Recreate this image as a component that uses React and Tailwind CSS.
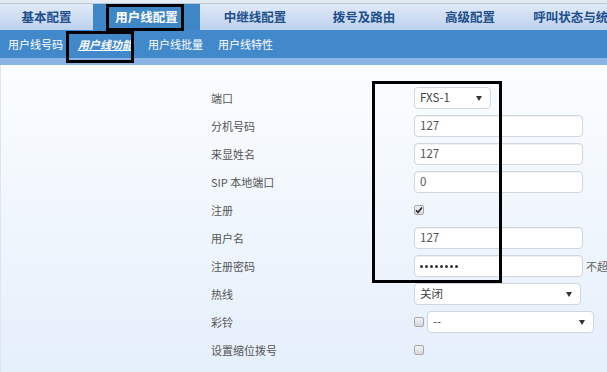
import React from "react";

const font = { fontFamily: '"Noto Sans CJK SC", "Liberation Sans", sans-serif' };

const tabs = [
  { t: "基本配置", w: "w-[93px]" },
  { t: "用户线配置", w: "w-[107px]", active: true },
  { t: "中继线配置", w: "w-[110px]" },
  { t: "拨号及路由", w: "w-[108px]" },
  { t: "高级配置", w: "w-[104px]" },
  { t: "呼叫状态与统计", w: "w-[110px]" },
];

function Caret() {
  return (
    <svg width="6" height="5" viewBox="0 0 6 5">
      <path d="M0 0 H6 L3 5 Z" fill="#333" />
    </svg>
  );
}

function Input({ value, w = "w-[169px]", children }) {
  return (
    <div className={`${w} shrink-0 h-[22px] rounded-[4px] border border-[#cfd6df] bg-white flex items-center px-[5px] text-[11.5px] text-[#555] shadow-[inset_0_1px_1px_rgba(0,0,0,0.06)]`}>
      {children ?? value}
    </div>
  );
}

function Select({ value, w }) {
  return (
    <div className={`${w} shrink-0 h-[22px] rounded-[4px] border border-[#cfd6df] bg-white flex items-center justify-between pl-[5px] pr-[8px] text-[11.5px] text-[#444]`}>
      <span>{value}</span>
      <Caret />
    </div>
  );
}

function Check({ checked }) {
  return (
    <div className="w-[10px] h-[10px] shrink-0 rounded-[2px] border border-[#a8a8a8] bg-gradient-to-b from-[#f2f2f2] to-[#d8d8d8] flex items-center justify-center">
      {checked && (
        <svg width="8" height="8" viewBox="0 0 8 8">
          <path d="M1 4.2 L3 6.2 L7 1.5" stroke="#222" strokeWidth="1.6" fill="none" />
        </svg>
      )}
    </div>
  );
}

function Dots() {
  return (
    <div className="flex gap-[2px]">
      {Array.from({ length: 8 }).map((_, i) => (
        <div key={i} className="w-[3px] h-[3px] rounded-full bg-[#333]" />
      ))}
    </div>
  );
}

const rows = [
  ["端口", <Select value="FXS-1" w="w-[77px]" />],
  ["分机号码", <Input value="127" />],
  ["来显姓名", <Input value="127" />],
  ["SIP 本地端口", <Input value="0" />],
  ["注册", <Check checked />],
  ["用户名", <Input value="127" />],
  [
    "注册密码",
    <div className="flex items-center gap-[3px]">
      <Input>
        <Dots />
      </Input>
      <span className="text-[11px] text-[#666] whitespace-nowrap">不超过</span>
    </div>,
  ],
  ["热线", <Select value="关闭" w="w-[167px]" />],
  [
    "彩铃",
    <div className="flex items-center gap-[3px]">
      <Check />
      <Select value="--" w="w-[167px]" />
    </div>,
  ],
  ["设置缩位拨号", <Check />],
  ["", <Check />],
];

export default function App() {
  return (
    <div className="w-[607px] h-[372px] overflow-hidden relative bg-white" style={font}>
      <div className="h-[4px] bg-[#e4ebf4] border-b border-[#b9c7d9]" />
      <div className="flex h-[26px] bg-gradient-to-b from-[#e1eaf7] to-[#bcd1ee]">
        {tabs.map((t) => (
          <div
            key={t.t}
            className={`${t.w} shrink-0 flex items-center justify-center text-[12.5px] font-bold whitespace-nowrap overflow-hidden ${
              t.active ? "bg-[#3f86c7] text-white" : "text-[#214f8c]"
            }`}
          >
            {t.t}
          </div>
        ))}
      </div>
      <div className="flex h-[28px] bg-[#4189ca] items-center text-[11px] text-white whitespace-nowrap">
        <div className="w-[78px] shrink-0 pl-[8px]">用户线号码</div>
        <div className="w-[70px] shrink-0 font-bold italic underline">用户线功能</div>
        <div className="w-[70px] shrink-0">用户线批量</div>
        <div className="shrink-0">用户线特性</div>
      </div>
      <div className="h-[7px] bg-[#8ab3e6]" />
      <div className="h-[307px] bg-gradient-to-b from-[#fbfdff] to-[#e5effb] pt-[19px] pl-[210px] border-l border-[#dde6f0]">
        {rows.map(([label, ctrl], i) => (
          <div key={i} className="h-[28px] flex items-center">
            <div className="w-[203px] shrink-0 text-[11px] text-[#555] whitespace-nowrap">{label}</div>
            <div className="shrink-0">{ctrl}</div>
          </div>
        ))}
      </div>
      {/* annotation boxes */}
      <div className="absolute left-[106px] top-[4px] w-[78px] h-[27px] border-[3px] border-black" />
      <div className="absolute left-[66px] top-[31px] w-[68px] h-[32px] border-[3px] border-black" />
      <div className="absolute left-[372px] top-[81px] w-[130px] h-[202px] border-[3px] border-black" />
    </div>
  );
}
